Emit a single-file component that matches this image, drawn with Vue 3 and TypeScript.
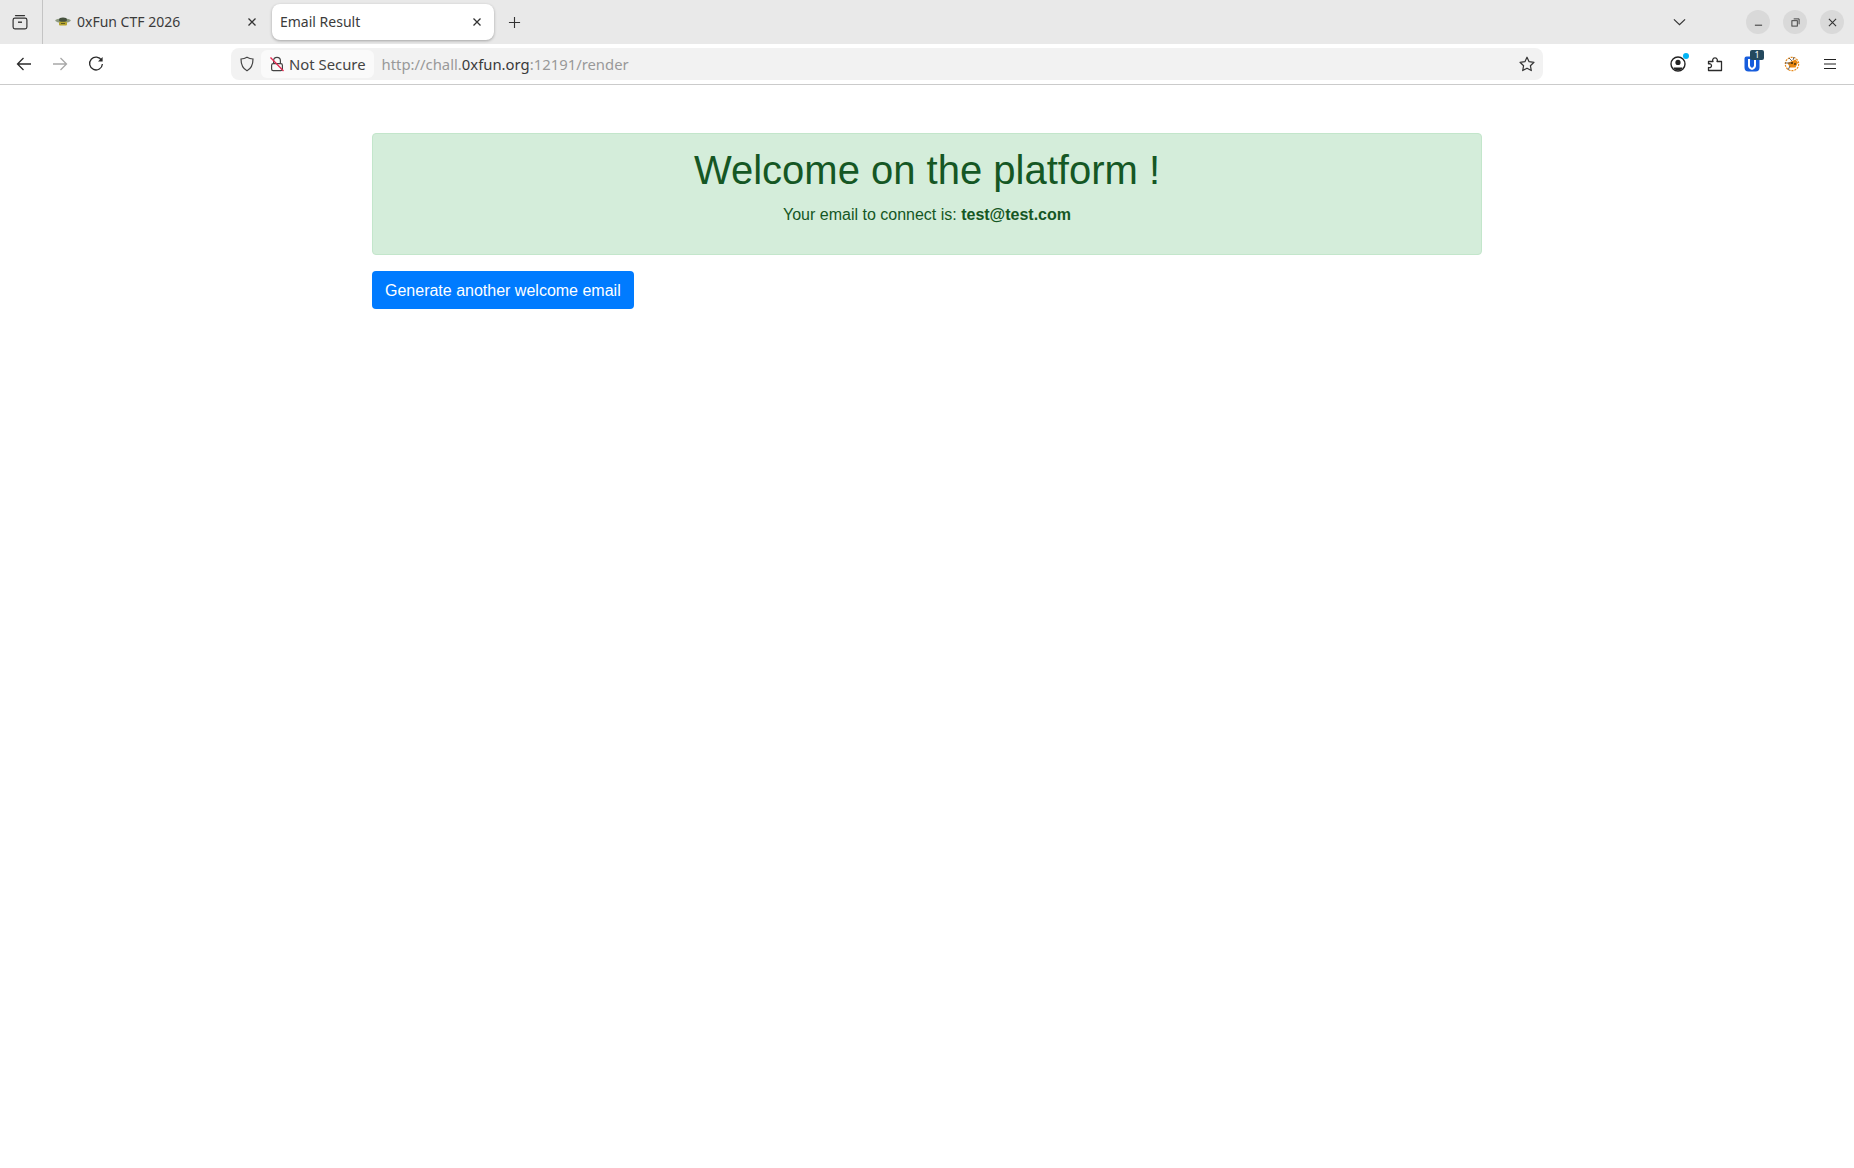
<script setup lang="ts">
const tabs = [
  { title: "0xFun CTF 2026", active: false, favicon: true },
  { title: "Email Result", active: true, favicon: false },
];
</script>

<template>
  <div class="window">
    <header class="tabbar">
      <button class="tab-tool" type="button" aria-label="Firefox View">
        <svg viewBox="0 0 16 16" fill="none" stroke="currentColor" stroke-width="1.2">
          <path d="M3.5 1.6h9" stroke-linecap="round" />
          <rect x="1.1" y="4.1" width="13.8" height="10.8" rx="1.8" />
          <path d="M6 8.2h4" stroke-width="1.4" />
        </svg>
      </button>
      <div class="tabs">
        <div v-for="tab in tabs" :key="tab.title" class="tab" :class="{ 'is-active': tab.active }">
          <svg v-if="tab.favicon" class="favicon" viewBox="0 0 16 10">
            <ellipse cx="8" cy="3.600" rx="7.800" ry="2.200" fill="#8d9a80" />
            <ellipse cx="8" cy="2.800" rx="4" ry="2.400" fill="#46523f" />
            <rect x="4" y="4.800" width="8" height="3.800" rx="1" fill="#b7a52e" />
            <path d="M6 6.500h4" stroke="#4a4a20" stroke-width="0.8" />
          </svg>
          <span class="tab-title">{{ tab.title }}</span>
          <svg class="tab-close" viewBox="0 0 10 10" fill="none" stroke="currentColor" stroke-width="1.3">
            <path d="M1.500 1.500l7 7M8.500 1.500l-7 7" />
          </svg>
        </div>
        <button class="new-tab" type="button" aria-label="New tab">
          <svg viewBox="0 0 14 14" fill="none" stroke="currentColor" stroke-width="1.2">
            <path d="M7 1v12M1 7h12" />
          </svg>
        </button>
      </div>
      <svg class="tab-list" viewBox="0 0 14 8" fill="none" stroke="currentColor" stroke-width="1.3">
        <path d="M1 1.200l6 5.600 6-5.600" />
      </svg>
      <div class="window-controls">
        <span class="win-btn">
          <svg viewBox="0 0 10 10" fill="none" stroke="currentColor" stroke-width="1.1"><path d="M1 8h8" /></svg>
        </span>
        <span class="win-btn">
          <svg viewBox="0 0 10 10" fill="none" stroke="currentColor" stroke-width="1"><rect x="1" y="3" width="6" height="6" /><path d="M3 1h6v6" /></svg>
        </span>
        <span class="win-btn">
          <svg viewBox="0 0 10 10" fill="none" stroke="currentColor" stroke-width="1.2"><path d="M1 1l8 8M9 1l-8 8" /></svg>
        </span>
      </div>
    </header>

    <nav class="toolbar">
      <div class="nav-buttons">
        <svg class="nav-icon" viewBox="0 0 16 16" fill="none" stroke="currentColor" stroke-width="1.3">
          <path d="M15 8H1.500M7.500 2L1.500 8l6 6" />
        </svg>
        <svg class="nav-icon is-disabled" viewBox="0 0 16 16" fill="none" stroke="currentColor" stroke-width="1.3">
          <path d="M1 8h13.500M8.500 2l6 6-6 6" />
        </svg>
        <svg class="nav-icon" viewBox="0 0 16 16" fill="none" stroke="currentColor" stroke-width="1.3">
          <path d="M13.600 4.400A6.400 6.400 0 1 0 14.400 8" />
          <path d="M14.600 1v4.600H10z" fill="currentColor" stroke="none" />
        </svg>
      </div>
      <div class="urlbar">
        <svg class="shield" viewBox="0 0 16 16" fill="none" stroke="currentColor" stroke-width="1.2">
          <path d="M8 1.200c2 1.200 4 1.700 6 1.800 0 5.400-1.700 9.500-6 11.800C3.700 12.500 2 8.400 2 3c2-.1 4-.6 6-1.800z" />
        </svg>
        <span class="secure-box">
          <svg class="lock" viewBox="0 0 16 16" fill="none">
            <path d="M4.600 7V4.800a3.400 3.400 0 0 1 6.800 0V7" stroke="#444" stroke-width="1.2" />
            <rect x="2.600" y="7.600" width="10.800" height="7" rx="1.600" stroke="#444" stroke-width="1.2" />
            <path d="M1.500 1.500l13 13.500" stroke="#e22850" stroke-width="1.3" />
          </svg>
          <span class="secure-label">Not Secure</span>
        </span>
        <span class="url">http://chall.<b>0xfun.org</b>:12191/render</span>
        <svg class="star" viewBox="0 0 16 16" fill="none" stroke="currentColor" stroke-width="1.2" stroke-linejoin="round">
          <path d="M8 1.200l2.100 4.500 4.900.6-3.600 3.400.9 4.900L8 12.200l-4.300 2.400.9-4.900L1 6.300l4.900-.6z" />
        </svg>
      </div>
      <div class="extensions">
        <span class="ext-account">
          <svg viewBox="0 0 16 16" fill="none" stroke="#222">
            <circle cx="8" cy="8" r="7" stroke-width="1.4" />
            <circle cx="8" cy="6.400" r="2.600" fill="#222" stroke="none" />
            <path d="M3.600 11.400h8.800v1.200L10 14.200H6l-2.400-1.600z" fill="#222" stroke="none" />
          </svg>
          <i class="account-dot"></i>
        </span>
        <svg class="ext-puzzle" viewBox="0 0 16 16" fill="none" stroke="#2b2b2b" stroke-width="1.3" stroke-linejoin="round">
          <path d="M1.500 5.500H6c-.6-.8-.6-3.700 2-3.700s2.600 2.900 2 3.700h4.500v9h-13v-3c1.500.5 3-.3 3-1.800s-1.500-2.300-3-1.800z" />
        </svg>
        <span class="ext-bitwarden">
          <svg viewBox="0 0 16 16">
            <path d="M0.500 2.500a2 2 0 0 1 2-2h11a2 2 0 0 1 2 2v9a4 4 0 0 1-4 4h-7a4 4 0 0 1-4-4z" fill="#175ddc" />
            <path d="M4 3h8v6.500c0 2.200-1.500 3.700-4 4.600-2.500-.9-4-2.400-4-4.600z" fill="#fff" />
            <path d="M6 3h4v6.300c0 1.200-.8 2-2 2.600-1.200-.6-2-1.400-2-2.600z" fill="#175ddc" />
          </svg>
          <i class="ext-badge">1</i>
        </span>
        <svg class="ext-bug" viewBox="0 0 16 16" fill="none">
          <circle cx="8" cy="8" r="6.700" stroke="#e88a1a" stroke-width="1.2" stroke-dasharray="2 1" />
          <path d="M3.500 7l8-3.500 2.500 3-2.500 5H6z" fill="#e8860f" />
          <circle cx="8" cy="7" r="1" fill="#3a2a10" />
          <circle cx="11" cy="8" r="0.9" fill="#3a2a10" />
          <path d="M1 7h6M5 2l3 3M10 1L9 4M6 10l-2 4" stroke="#555" stroke-width="0.9" />
        </svg>
        <svg class="menu-icon" viewBox="0 0 14 12" fill="none" stroke="#222" stroke-width="1.2">
          <path d="M1 1.500h12M1 6h12M1 10.500h12" />
        </svg>
      </div>
    </nav>

    <main class="container">
      <section class="alert">
        <h1>Welcome on the platform !</h1>
        <p>Your email to connect is: <strong>test@test.com</strong></p>
      </section>
      <button class="btn" type="button">Generate another welcome email</button>
    </main>
  </div>
</template>

<style scoped>
.window {
  min-height: 1168px;
  background: #fff;
  font-family: "Noto Sans", "Open Sans", sans-serif;
  color: #2b2b2b;
}

button {
  border: 0;
  background: transparent;
  padding: 0;
  color: inherit;
}

.tabbar {
  display: flex;
  align-items: center;
  height: 44px;
  background: #e9e9e9;
}

.tab-tool {
  display: flex;
  align-items: center;
  justify-content: center;
  flex: 0 0 auto;
  width: 40px;
  height: 44px;
  padding-right: 2px;
  border-right: 1px solid #c4c4c4;
  box-sizing: content-box;
  color: #333;
}

.tab-tool svg {
  width: 16px;
  height: 16px;
}

.tabs {
  display: flex;
  align-items: center;
  gap: 5px;
  flex: 1;
  min-width: 0;
}

.tab {
  display: flex;
  align-items: center;
  width: 224px;
  height: 36px;
  padding: 0 10px 0 12px;
  box-sizing: border-box;
  border-radius: 8px;
  font-size: 14px;
}

.tab.is-active {
  width: 222px;
  padding: 0 12px 0 8px;
  background: #fff;
  box-shadow: 0 1px 3px rgba(0, 0, 0, 0.3);
}

.favicon {
  flex: 0 0 auto;
  width: 16px;
  height: 10px;
  margin-right: 6px;
}

.tab-title {
  flex: 1;
  padding-bottom: 2px;
  color: #3b3b3b;
  white-space: nowrap;
}

.tab-close {
  flex: 0 0 auto;
  width: 10px;
  height: 10px;
  color: #333;
}

.new-tab {
  display: flex;
  margin-left: 9px;
  color: #333;
}

.new-tab svg {
  width: 13px;
  height: 13px;
}

.tab-list {
  width: 13px;
  height: 8px;
  margin-right: 60px;
  color: #333;
}

.window-controls {
  display: flex;
  gap: 13px;
  margin-right: 10px;
}

.win-btn {
  display: flex;
  align-items: center;
  justify-content: center;
  width: 24px;
  height: 24px;
  border-radius: 50%;
  background: #d9d9d9;
  color: #333;
}

.win-btn svg {
  width: 9px;
  height: 9px;
}

.toolbar {
  display: flex;
  align-items: center;
  height: 40px;
  background: #fff;
  border-bottom: 1px solid #cbcbcb;
}

.nav-buttons {
  display: flex;
  align-items: center;
  gap: 20px;
  flex: 0 0 auto;
  width: 231px;
  padding-left: 16px;
  box-sizing: border-box;
}

.nav-icon {
  width: 16px;
  height: 16px;
  color: #2b2b2b;
}

.nav-icon.is-disabled {
  color: #a8a8a8;
}

.urlbar {
  display: flex;
  align-items: center;
  flex: 0 0 auto;
  width: 1312px;
  height: 32px;
  padding: 0 8px;
  box-sizing: border-box;
  border-radius: 8px;
  background: #f2f2f2;
  font-size: 14.85px;
}

.shield {
  flex: 0 0 auto;
  width: 16px;
  height: 16px;
  color: #444;
  margin-right: 6px;
}

.secure-box {
  display: flex;
  align-items: center;
  gap: 4px;
  height: 28px;
  padding: 0 8px;
  border-radius: 6px;
  background: #fafafa;
  color: #444;
  white-space: nowrap;
}

.secure-label {
  padding-bottom: 1px;
}

.lock {
  width: 16px;
  height: 16px;
}

.url {
  flex: 1;
  margin-left: 8px;
  padding-bottom: 1px;
  color: #999;
  white-space: nowrap;
}

.url b {
  font-weight: 400;
  color: #3a3a3a;
}

.star {
  flex: 0 0 auto;
  width: 16px;
  height: 16px;
  color: #333;
}

.extensions {
  display: flex;
  align-items: center;
  flex: 1;
  padding-left: 127px;
}

.ext-account {
  position: relative;
  display: flex;
  width: 16px;
  height: 16px;
}

.account-dot {
  position: absolute;
  top: -3px;
  right: -3px;
  width: 6px;
  height: 6px;
  border-radius: 50%;
  background: #00b3f4;
}

.ext-puzzle {
  width: 16px;
  height: 16px;
  margin-left: 21px;
}

.ext-bitwarden {
  position: relative;
  display: flex;
  width: 16px;
  height: 16px;
  margin-left: 21px;
}

.ext-badge {
  position: absolute;
  top: -6px;
  left: 6px;
  width: 14px;
  height: 10px;
  border-radius: 2px;
  background: #24495e;
  color: #fff;
  font-size: 9px;
  font-style: normal;
  line-height: 10px;
  text-align: center;
}

.ext-bug {
  width: 16px;
  height: 16px;
  margin-left: 24px;
}

.menu-icon {
  width: 14px;
  height: 12px;
  margin-left: 23px;
}

.container {
  width: 1110px;
  margin: 0 auto;
  padding-top: 48px;
  font-family: "Liberation Sans", Arial, sans-serif;
}

.alert {
  height: 122px;
  padding: 12px 20px;
  box-sizing: border-box;
  border: 1px solid #c3e6cb;
  border-radius: 4px;
  background: #d4edda;
  color: #155724;
  text-align: center;
}

.alert h1 {
  margin: 0 0 9px;
  font-size: 40px;
  font-weight: 500;
  line-height: 48px;
}

.alert p {
  margin: 0;
  font-size: 16px;
  line-height: 24px;
}

.alert strong {
  font-weight: 700;
}

.btn {
  display: block;
  height: 38px;
  margin-top: 16px;
  padding: 2px 13px 0;
  border-radius: 4px;
  background: #007bff;
  color: #fff;
  font-family: inherit;
  font-size: 16px;
  line-height: 24px;
}
</style>
